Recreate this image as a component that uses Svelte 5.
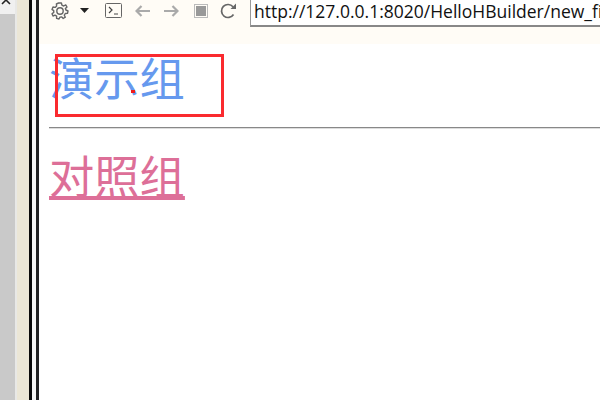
<script>
    const url = "http://127.0.0.1:8020/HelloHBuilder/new_file.html";
</script>

<div class="screen">
    <div class="scrollbar">
        <div class="arrow">
            <svg width="15" height="14" viewBox="0 0 15 14"><path d="M2 5 L6 1 L10 5" fill="none" stroke="#222" stroke-width="1.6"/></svg>
        </div>
        <div class="track"></div>
    </div>
    <div class="edge"></div>
    <div class="beige"></div>
    <div class="line thick"></div>
    <div class="gap"></div>
    <div class="line"></div>

    <div class="main">
        <div class="toolbar">
            <div class="tools">
                <svg class="gear" width="18" height="18" viewBox="0 0 18 18">
                    <path d="M7.6 1 H10.4 L10.9 3.2 L12.7 4 L14.7 2.9 L16 5 L14.4 6.6 L14.9 8 L17 9 L16.5 11.4 L14.3 11.5 L13.3 13.2 L14.3 15.2 L12.2 16.5 L10.8 14.9 L9 15.1 L8 17 L5.6 16.4 L5.6 14.2 L4 13.2 L2 14 L1 11.8 L2.8 10.4 L2.7 8.6 L1 7.4 L2 5 L4.2 5.4 L5.6 4 L5.4 2 Z" fill="none" stroke="#666" stroke-width="1.4" stroke-linejoin="round"/>
                    <circle cx="9" cy="9" r="3.200" fill="none" stroke="#666" stroke-width="1.400"/>
                </svg>
                <svg class="caret" width="9" height="5" viewBox="0 0 9 5"><path d="M0 0 H9 L4.500 5 Z" fill="#222"/></svg>
                <svg class="console" width="17" height="15" viewBox="0 0 17 15">
                    <rect x="0.500" y="0.500" width="16" height="14" rx="1" fill="none" stroke="#666"/>
                    <path d="M4 4 L7 7 L4 10 M9 11 H13" fill="none" stroke="#444" stroke-width="1.200"/>
                </svg>
                <svg class="back" width="15" height="12" viewBox="0 0 15 12"><path d="M15 6 H2 M6.500 1 L1.500 6 L6.500 11" fill="none" stroke="#aaa" stroke-width="2.200"/></svg>
                <svg class="forward" width="15" height="12" viewBox="0 0 15 12"><path d="M0 6 H13 M8.500 1 L13.500 6 L8.500 11" fill="none" stroke="#aaa" stroke-width="2.200"/></svg>
                <svg class="stop" width="14" height="14" viewBox="0 0 14 14">
                    <rect x="0.500" y="0.500" width="13" height="13" fill="none" stroke="#bbb"/>
                    <rect x="2" y="2" width="10" height="10" fill="#999"/>
                </svg>
                <svg class="reload" width="17" height="16" viewBox="0 0 17 16">
                    <path d="M13.500 11.500 A6.500 6.500 0 1 1 13 3.800" fill="none" stroke="#666" stroke-width="1.700"/>
                    <path d="M16 0.500 V6 H10.500 Z" fill="#666"/>
                </svg>
            </div>
            <div class="address">{url}</div>
        </div>

        <div class="page">
            <div class="demo">演示组</div>
            <hr />
            <a class="control" href="#control">对照组</a>
        </div>

        <div class="highlight"></div>
        <div class="dot"></div>
    </div>
</div>

<style>
    :global(body) {
        margin: 0;
        background: #fff;
    }
    .screen {
        display: flex;
        width: 600px;
        height: 400px;
        overflow: hidden;
    }
    .scrollbar {
        width: 15px;
        display: flex;
        flex-direction: column;
        background: #f0f0f0;
    }
    .arrow {
        height: 14px;
    }
    .arrow svg {
        display: block;
        margin-top: -1px;
    }
    .track {
        flex: 1;
        background: #c9c9c9;
    }
    .edge {
        width: 2px;
        background: #e8e8e6;
    }
    .beige {
        width: 12px;
        background: #ebe6d6;
    }
    .line {
        width: 3px;
        background: #222;
    }
    .line.thick {
        background: #0a0a0a;
    }
    .gap {
        width: 4px;
        background: #f7f7f5;
    }
    .main {
        flex: 1;
        position: relative;
        min-width: 0;
    }
    .toolbar {
        height: 44px;
        background: #fffcf6;
        display: flex;
        align-items: flex-start;
        padding-left: 12px;
        overflow: hidden;
    }
    .tools {
        display: flex;
        align-items: center;
        height: 21px;
        width: 199px;
        flex: none;
    }
    .caret { margin-left: 11px; }
    .console { margin-left: 16px; }
    .back { margin-left: 13px; }
    .forward { margin-left: 14px; }
    .stop { margin-left: 15px; }
    .reload { margin-left: 12px; }
    .address {
        height: 27px;
        flex: none;
        box-sizing: border-box;
        padding: 0 0 0 3px;
        background: #fff;
        border: 1px solid #999;
        border-top: 0;
        border-bottom: 2px solid #888;
        font: 17.5px/22px "Open Sans", "Noto Sans", sans-serif;
        color: #111;
        white-space: nowrap;
    }
    .page {
        padding: 2px 0 0 10px;
        display: flex;
        flex-direction: column;
        align-items: flex-start;
    }
    .demo,
    .control {
        font: 45.3px/60px "Noto Sans CJK SC", serif;
        font-weight: 400;
    }
    .demo {
        color: #6699ee;
    }
    hr {
        align-self: stretch;
        margin: 21px 0 0;
        border: 0;
        border-top: 1px solid #888;
        border-bottom: 1px solid #ddd;
    }
    .control {
        color: #dd6f98;
        margin-top: 15px;
        text-decoration: underline;
        text-decoration-thickness: 4px;
    }
    .highlight {
        position: absolute;
        left: 16px;
        top: 54px;
        width: 169px;
        height: 63px;
        box-sizing: border-box;
        border: 3px solid #fa2a2f;
    }
    .dot {
        position: absolute;
        left: 92px;
        top: 90px;
        width: 4px;
        height: 3px;
        background: #f01c1c;
    }
</style>
